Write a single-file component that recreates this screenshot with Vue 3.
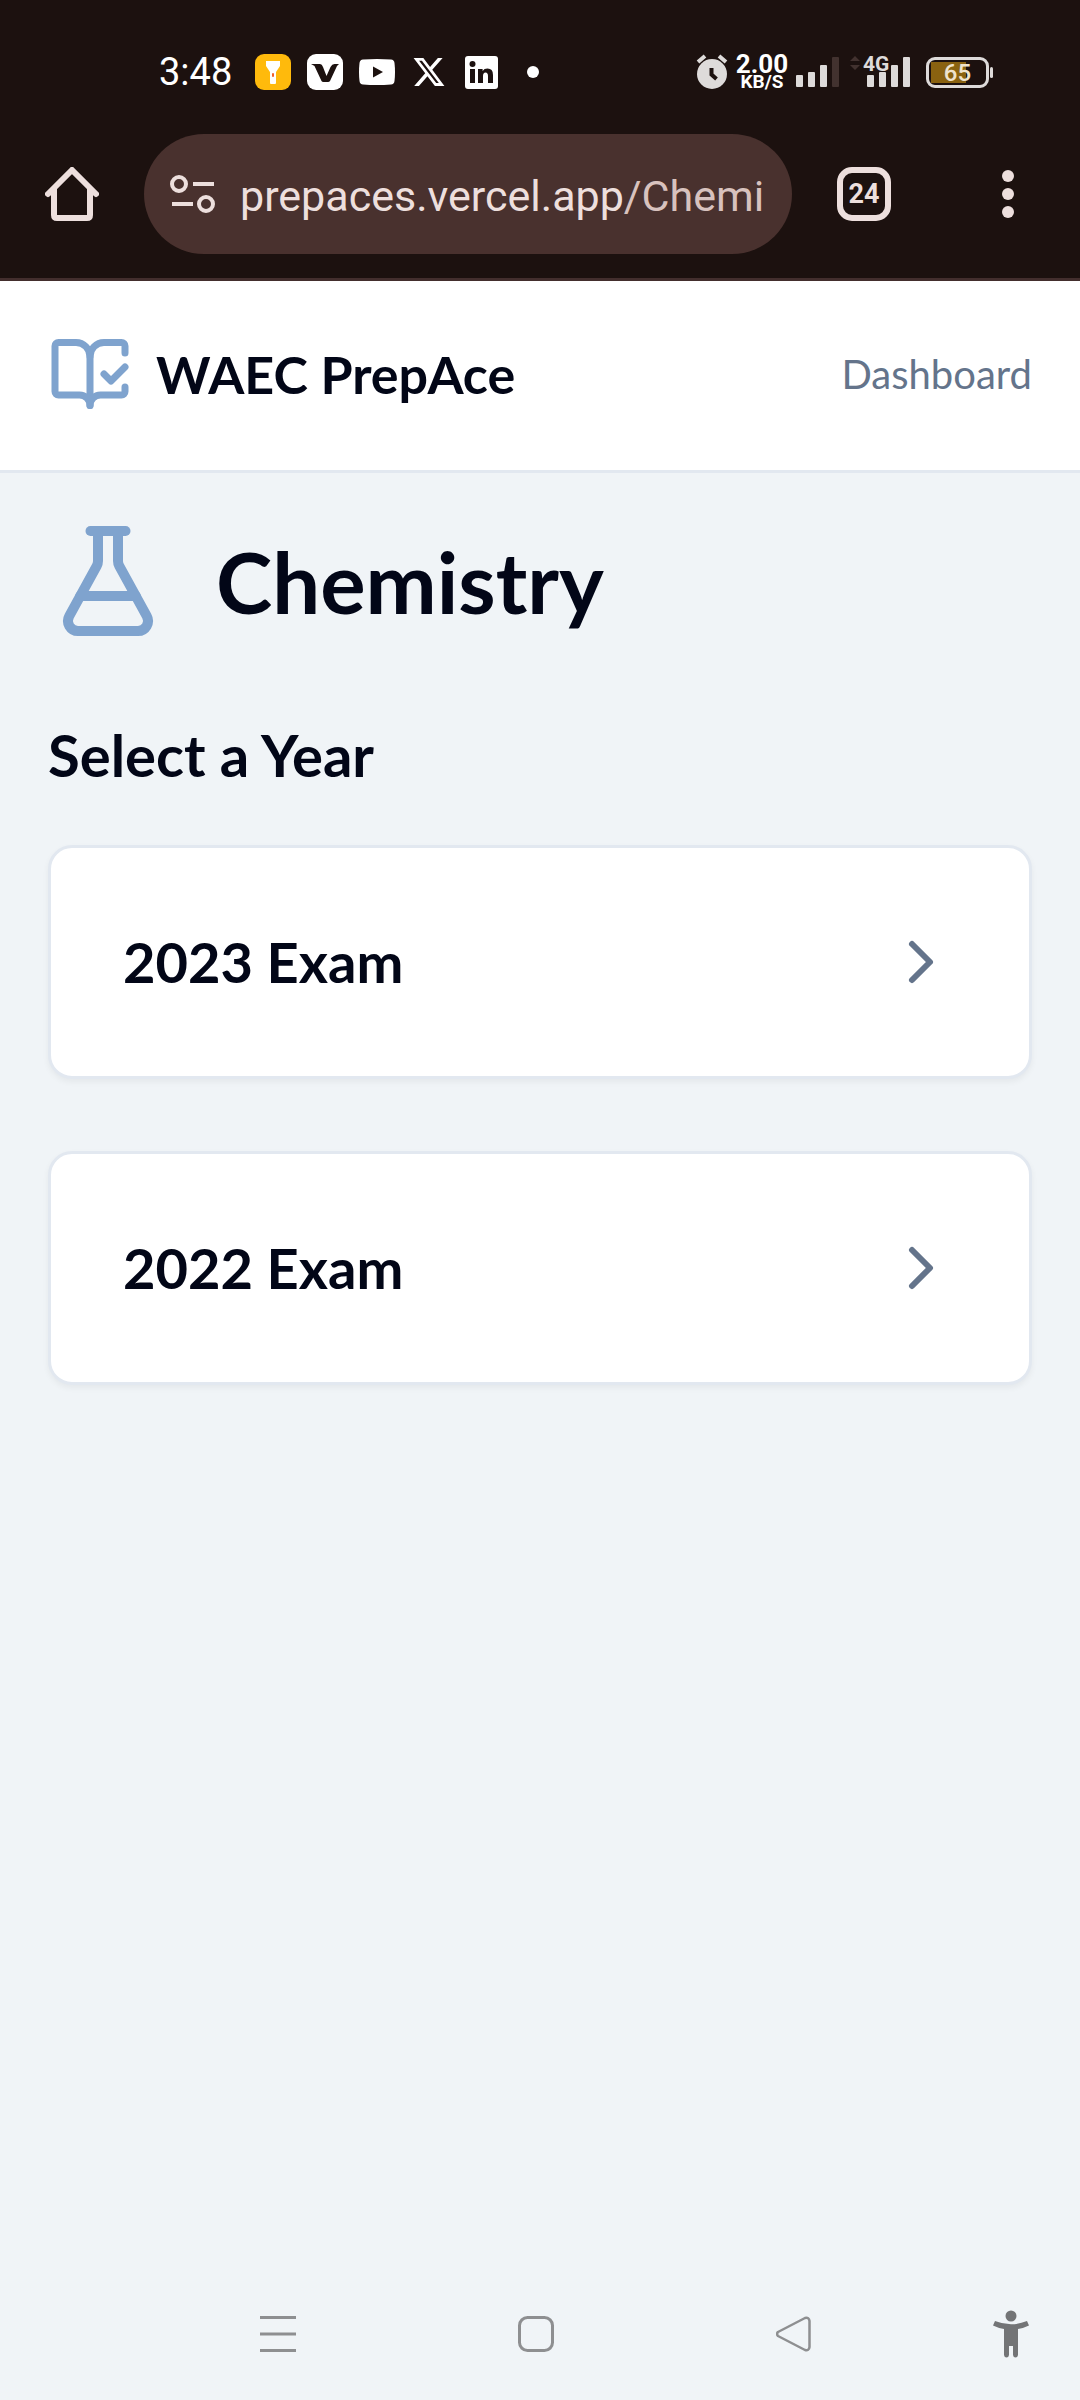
<script setup>
const exams = [
  { year: 2023, label: '2023 Exam' },
  { year: 2022, label: '2022 Exam' },
]
</script>

<template>
  <div class="screen">
    <div class="chrome">
      <div class="status">
        <div class="status-left">
          <span class="clock">3:48</span>
          <svg class="app" viewBox="0 0 36 36" aria-hidden="true">
            <rect width="36" height="36" rx="9" fill="#ffba0c" />
            <path d="M11 7h14v5l-4 6v11q0 1-1 1h-4q-1 0-1-1V18l-4-6z" fill="#fff" />
            <rect x="17" y="19" width="2" height="4" rx="1" fill="#f0602a" />
          </svg>
          <svg class="app" viewBox="0 0 36 36" aria-hidden="true">
            <rect width="36" height="36" rx="9" fill="#fff" />
            <path d="M4 10h9q2 0 3 3l3.500 9 4-9q1.500-3 4-3H32l-2 2-7 15q-.6 1-2 1h-4.500q-1.500 0-2-1L7.500 12z" fill="#1c110f" />
          </svg>
          <svg class="app" viewBox="0 0 36 36" aria-hidden="true">
            <path d="M4 5.500Q18 4.500 32 5.500q3 .4 3.500 3.500 1 9 0 18-.5 3.100-3.500 3.500-14 1-28 0Q1 30.100.5 27q-1-9 0-18Q1 5.900 4 5.500z" fill="#fff" />
            <path d="M14 12.500v11l10-5.500z" fill="#1c110f" />
          </svg>
          <svg class="app" viewBox="-2 -2 28 28" aria-hidden="true">
            <path d="M18.901 1.153h3.680l-8.040 9.190L24 22.846h-7.406l-5.800-7.584-6.638 7.584H.474l8.600-9.830L0 1.154h7.594l5.243 6.932ZM17.610 20.644h2.039L6.486 3.240H4.298Z" fill="#fff" />
          </svg>
          <svg class="app" viewBox="0 0 36 36" aria-hidden="true">
            <rect x="2" y="2" width="33" height="33" rx="3" fill="#fff" />
            <circle cx="9.500" cy="10" r="3" fill="#1c110f" />
            <path d="M7 15h5v14H7zM15 15h4.600v2q1.600-2.400 4.900-2.400 5.500 0 5.500 6.400v8h-5v-7q0-3.500-2.500-3.500T20 22v7h-5z" fill="#1c110f" />
          </svg>
          <svg class="app" viewBox="0 0 36 36" aria-hidden="true">
            <circle cx="18" cy="18" r="6" fill="#fff" />
          </svg>
        </div>
        <div class="status-right">
          <svg width="32" height="36" viewBox="0 0 32 36" aria-hidden="true">
            <circle cx="16" cy="20" r="15" fill="#dedbda" />
            <path d="M2 8l7-6M30 8l-7-6" stroke="#dedbda" stroke-width="4" />
            <path d="M15.500 14v6.500l5 4.500" fill="none" stroke="#1c110f" stroke-width="4" />
          </svg>
          <div class="speed"><span class="rate">2.00</span><span class="unit">KB/S</span></div>
          <svg width="44" height="36" viewBox="0 0 44 36" aria-hidden="true">
            <g fill="#dedbda">
              <rect y="21" width="7" height="12" rx="1" />
              <rect x="12" y="18" width="7" height="15" rx="1" />
              <rect x="24" y="11" width="7" height="22" rx="1" />
            </g>
            <rect x="36" y="3" width="7" height="30" rx="1" fill="#42322f" />
          </svg>
          <svg class="mobile" width="62" height="36" viewBox="0 0 62 36">
            <path d="M1 7l5-5 5 5zM1 11h10l-5 5z" fill="#42322f" />
            <g fill="#dedbda">
              <rect x="18" y="21" width="7" height="12" rx="1" />
              <rect x="30" y="18" width="7" height="15" rx="1" />
              <rect x="42" y="11" width="7" height="22" rx="1" />
              <rect x="54" y="3" width="7" height="30" rx="1" />
            </g>
            <text x="14" y="17" fill="#dedbda">4G</text>
          </svg>
          <div class="battery"><span>65</span></div>
        </div>
      </div>

      <div class="toolbar">
        <button class="icon-btn" type="button" aria-label="Home">
          <svg width="54" height="54" viewBox="0 0 54 54" aria-hidden="true">
            <path d="M3 27 27 3l24 24M9 22v26q0 3 3 3h30q3 0 3-3V22" fill="none" stroke="#eddfdd" stroke-width="6" stroke-linecap="round" stroke-linejoin="round" />
          </svg>
        </button>
        <button class="omnibox" type="button" aria-label="Address bar">
          <svg width="46" height="40" viewBox="0 0 46 40" aria-hidden="true">
            <g fill="none" stroke="#eddfdd" stroke-width="4">
              <circle cx="9" cy="10" r="7" />
              <circle cx="36" cy="30" r="7" />
              <path d="M23 10h21M2 30h21" />
            </g>
          </svg>
          <span class="url">prepaces.vercel.app<span class="path">/Chemi</span></span>
        </button>
        <button class="tabs" type="button" aria-label="Open tabs">24</button>
        <button class="icon-btn" type="button" aria-label="Menu">
          <svg width="54" height="54" viewBox="0 0 54 54" aria-hidden="true">
            <g fill="#eddfdd">
              <circle cx="27" cy="9" r="6" />
              <circle cx="27" cy="27" r="6" />
              <circle cx="27" cy="45" r="6" />
            </g>
          </svg>
        </button>
      </div>
    </div>

    <header class="header">
      <a class="brand" href="#">
        <svg class="line-icon" width="84" height="84" viewBox="0 0 24 24" aria-hidden="true">
          <path d="M12 21V7" />
          <path d="m16 12 2 2 4-4" />
          <path d="M22 6V4a1 1 0 0 0-1-1h-5a4 4 0 0 0-4 4 4 4 0 0 0-4-4H3a1 1 0 0 0-1 1v13a1 1 0 0 0 1 1h6a3 3 0 0 1 3 3 3 3 0 0 1 3-3h6a1 1 0 0 0 1-1v-1.300" />
        </svg>
        <span>WAEC PrepAce</span>
      </a>
      <a class="dash" href="#">Dashboard</a>
    </header>

    <main class="main">
      <div class="subject">
        <svg class="line-icon" width="120" height="120" viewBox="0 0 24 24" aria-hidden="true">
          <path d="M14 2v6a2 2 0 0 0 .245.960l5.510 10.080A2 2 0 0 1 18 22H6a2 2 0 0 1-1.755-2.960l5.510-10.080A2 2 0 0 0 10 8V2" />
          <path d="M6.453 15h11.094" />
          <path d="M8.500 2h7" />
        </svg>
        <h1>Chemistry</h1>
      </div>
      <h2>Select a Year</h2>
      <nav class="exams" aria-label="Exam years">
        <a v-for="exam in exams" :key="exam.year" class="card" href="#">
          <span>{{ exam.label }}</span>
          <svg class="line-icon chevron" width="72" height="72" viewBox="0 0 24 24" aria-hidden="true">
            <path d="m9 18 6-6-6-6" />
          </svg>
        </a>
      </nav>
    </main>

    <div class="sysnav">
      <button type="button" aria-label="Recent apps">
        <svg width="36" height="36" viewBox="0 0 36 36" aria-hidden="true">
          <path d="M0 1.500h36M0 18h36M0 34.500h36" stroke="#8e8f91" stroke-width="3" />
        </svg>
      </button>
      <button type="button" aria-label="Home screen">
        <svg width="36" height="36" viewBox="0 0 36 36" aria-hidden="true">
          <rect x="1.500" y="1.500" width="33" height="33" rx="8" fill="none" stroke="#8e8f91" stroke-width="3" />
        </svg>
      </button>
      <button type="button" aria-label="Back">
        <svg width="36" height="36" viewBox="0 0 36 36" aria-hidden="true">
          <path d="M2 16 29 2q4-1 4.500 3v26q-.5 4-4.500 3L2 20q-2-2 0-4z" fill="none" stroke="#8e8f91" stroke-width="2.500" stroke-linejoin="round" />
        </svg>
      </button>
      <button class="access" type="button" aria-label="Accessibility">
        <svg width="36" height="48" viewBox="0 0 36 48" aria-hidden="true">
          <g fill="#737476">
            <circle cx="18" cy="6" r="5.500" />
            <path d="M2 11q16 6.500 32 0l2 4.500q-5 2.500-11 3.500v26q-.4 2.500-2.500 2.500T20 45v-9h-4v9q-.4 2.500-2.500 2.500T11 45V19Q5 18 0 15.500z" />
          </g>
        </svg>
      </button>
    </div>
  </div>
</template>

<style>
body {
  background: #f0f4f7;
}
</style>

<style scoped>
.screen {
  display: flex;
  flex-direction: column;
  min-height: 100vh;
  background: #f0f4f7;
  color: #020617;
  font-family: Lato, "Open Sans", sans-serif;
}

button {
  padding: 0;
  border: 0;
  background: none;
  font: inherit;
}

a {
  color: inherit;
  text-decoration: none;
}

svg {
  display: block;
  flex: none;
}

.line-icon {
  fill: none;
  stroke: #7fa3ce;
  stroke-width: 2;
  stroke-linecap: round;
  stroke-linejoin: round;
}

.chrome {
  background: #1c110f;
  border-bottom: 3px solid #432e2d;
  font-family: Roboto, sans-serif;
}

.status {
  display: flex;
  justify-content: space-between;
  align-items: center;
  padding: 54px 87px 0 159px;
  height: 36px;
}

.status-left {
  display: flex;
  align-items: center;
  gap: 16px;
}

.clock {
  width: 80px;
  color: #fff;
  font-size: 38px;
  line-height: 36px;
}

.app {
  width: 36px;
  height: 36px;
}

.status-right {
  display: flex;
  align-items: center;
  gap: 9px;
}

.speed {
  display: flex;
  flex-direction: column;
  align-items: center;
  width: 50px;
  color: #fff;
  font-weight: 700;
}

.rate {
  font-size: 26px;
  line-height: 20px;
}

.unit {
  font-size: 19px;
  line-height: 16px;
}

.mobile {
  overflow: visible;
}

.mobile text {
  font-size: 21px;
  font-weight: 700;
}

.battery {
  position: relative;
  box-sizing: border-box;
  width: 63px;
  height: 31px;
  margin: 0 4px 0 6px;
  border: 3px solid #dedbda;
  border-radius: 9px;
  background: linear-gradient(#8a6210, #8a6210) 2px 2px / 35px 21px no-repeat;
  color: #efe3cc;
  font-size: 24px;
  font-weight: 500;
  line-height: 26px;
  text-align: center;
}

.battery::after {
  content: "";
  position: absolute;
  top: 7px;
  right: -7px;
  width: 3px;
  height: 11px;
  border-radius: 2px;
  background: #dedbda;
}

.toolbar {
  display: flex;
  align-items: center;
  gap: 45px;
  padding: 44px 45px 24px;
}

.omnibox {
  display: flex;
  flex: 1;
  align-items: center;
  gap: 24px;
  min-width: 0;
  height: 120px;
  padding: 0 24px 0 26px;
  border-radius: 60px;
  background: #49312e;
  text-align: left;
}

.url {
  flex: 1;
  padding-top: 3px;
  overflow: hidden;
  color: #eddfdd;
  font-size: 43px;
  line-height: 60px;
  white-space: nowrap;
}

.path {
  color: #d8c2be;
}

.tabs {
  box-sizing: border-box;
  width: 54px;
  height: 54px;
  margin-right: 45px;
  border: 6px solid #eddfdd;
  border-radius: 15px;
  color: #eddfdd;
  font-size: 27px;
  font-weight: 700;
  line-height: 42px;
}

.header {
  display: flex;
  justify-content: space-between;
  align-items: center;
  height: 186px;
  padding: 0 48px 3px;
  border-bottom: 3px solid #e2e8f0;
  background: #fff;
}

.brand {
  display: flex;
  align-items: center;
  gap: 24px;
  font-size: 52px;
  font-weight: 700;
  line-height: 84px;
}

.dash {
  color: #64748b;
  font-size: 40px;
  line-height: 60px;
}

.main {
  flex: 1;
  padding: 48px;
}

.subject {
  display: flex;
  align-items: center;
  gap: 48px;
  margin-bottom: 72px;
}

h1,
h2 {
  margin: 0;
  font-weight: 700;
}

h1 {
  font-size: 85px;
  line-height: 120px;
}

h2 {
  margin-bottom: 48px;
  font-size: 58px;
  line-height: 84px;
}

.exams {
  display: flex;
  flex-direction: column;
  gap: 72px;
}

.card {
  display: flex;
  justify-content: space-between;
  align-items: center;
  padding: 72px;
  border: 3px solid #e2e8f0;
  border-radius: 24px;
  background: #fff;
  box-shadow: 0 3px 6px rgba(0, 0, 0, 0.05);
  font-size: 56px;
  font-weight: 700;
  line-height: 84px;
}

.chevron {
  stroke: #64748b;
}

.sysnav {
  display: grid;
  grid-template-columns: 1fr 1fr 1fr 124px;
  height: 132px;
  padding: 0 33px 0 149px;
}

.sysnav button {
  display: flex;
  align-items: center;
  justify-content: center;
}

.sysnav .access {
  justify-content: flex-end;
  padding-right: 18px;
}
</style>
